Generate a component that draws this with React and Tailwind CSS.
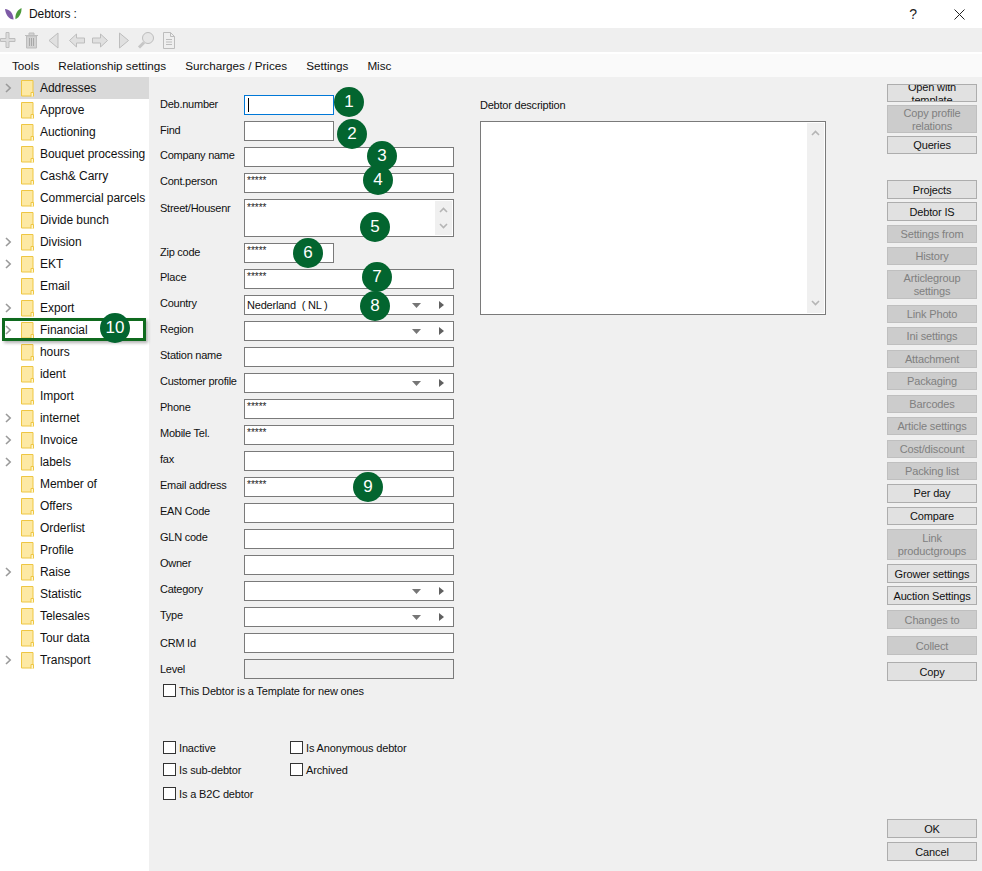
const FONT = "font-['Liberation_Sans',Arial,sans-serif]";

function Folder() {
  return (
    <svg width="13" height="17" viewBox="0 0 13 17" className="shrink-0">
      <path d="M.5.5h11.5v15.5H.5z" fill="#fde9a4" stroke="#eec643" />
      <path d="M10 16.5v-4h2.5v4" fill="#fff6d0" stroke="#eec643" />
    </svg>
  );
}

function Chevron() {
  return (
    <svg width="7" height="10" viewBox="0 0 7 10">
      <path d="M1 1l4.2 4L1 9" fill="none" stroke="#9a9a9a" strokeWidth="1.6" />
    </svg>
  );
}

const tree = [
  ["Addresses", true], ["Approve"], ["Auctioning"], ["Bouquet processing"], ["Cash& Carry"],
  ["Commercial parcels"], ["Divide bunch"], ["Division", true], ["EKT", true], ["Email"],
  ["Export", true], ["Financial", true], ["hours"], ["ident"], ["Import"], ["internet", true],
  ["Invoice", true], ["labels", true], ["Member of"], ["Offers"], ["Orderlist"], ["Profile"],
  ["Raise", true], ["Statistic"], ["Telesales"], ["Tour data"], ["Transport", true],
];

function Sidebar() {
  return (
    <div className="w-[149px] shrink-0 bg-white pb-[200px]">
      {tree.map(([name, arrow], i) => (
        <div key={name} className={`h-[22px] flex items-center text-[12px] tracking-[-0.05px] text-[#111] ${i === 0 ? "bg-[#d9d9d9]" : ""}`}>
          <div className="w-[21px] pl-[5px] flex items-center">{arrow && <Chevron />}</div>
          <Folder />
          <span className="ml-[6px] whitespace-nowrap">{name}</span>
        </div>
      ))}
    </div>
  );
}

function Input({ value, wide = true, tall, focus, combo, disabled }) {
  return (
    <div
      className={`relative flex items-center border ${focus ? "border-[#0078d7]" : "border-[#7a7a7a]"} ${disabled ? "bg-[#f0f0f0]" : "bg-white"} ${wide ? "w-[210px]" : "w-[90px]"} ${tall ? "h-[38px] items-start pt-[1px]" : "h-[20px]"} pl-[2px] text-[11px] text-[#111] overflow-hidden`}
    >
      {focus && <div className="w-px h-[14px] bg-black ml-px" />}
      {value && <span className={value === "*****" ? "text-[10px] leading-[12px] text-[#222] self-start mt-[1px]" : "whitespace-pre tracking-[-0.2px]"}>{value}</span>}
      {combo && (
        <div className="absolute right-[9px] top-[5px] flex items-center gap-[18px]">
          <svg width="9" height="5" viewBox="0 0 9 5"><path d="M0 0h9L4.5 5z" fill="#767676" /></svg>
          <svg width="5" height="8" viewBox="0 0 5 8"><path d="M0 0l5 4-5 4z" fill="#606060" /></svg>
        </div>
      )}
      {tall && (
        <div className="absolute right-[1px] top-[1px] bottom-[1px] w-[17px] bg-[#f0f0f0] flex flex-col justify-between items-center py-[6px]">
          <svg width="9" height="6" viewBox="0 0 9 6"><path d="M1 5l3.5-3.5L8 5" fill="none" stroke="#b5b5b5" strokeWidth="1.6" /></svg>
          <svg width="9" height="6" viewBox="0 0 9 6"><path d="M1 1l3.5 3.5L8 1" fill="none" stroke="#b5b5b5" strokeWidth="1.6" /></svg>
        </div>
      )}
    </div>
  );
}

const UP = "leading-[16px]";
const MID = "leading-[18px]";
const DOWN = "leading-[20px]";

const rows = [
  { label: "Deb.number", wide: false, focus: true, lh: MID },
  { label: "Find", wide: false, lh: MID },
  { label: "Company name", lh: UP },
  { label: "Cont.person", value: "*****", lh: UP },
  { label: "Street/Housenr", value: "*****", tall: true, lh: MID },
  { label: "Zip code", value: "*****", wide: false, lh: MID },
  { label: "Place", value: "*****", lh: UP },
  { label: "Country", value: "Nederland  ( NL )", combo: true, lh: UP },
  { label: "Region", combo: true, lh: UP },
  { label: "Station name", lh: UP },
  { label: "Customer profile", combo: true, lh: UP },
  { label: "Phone", value: "*****", lh: UP },
  { label: "Mobile Tel.", value: "*****", lh: UP },
  { label: "fax", lh: UP },
  { label: "Email address", value: "*****", lh: UP },
  { label: "EAN Code", lh: UP },
  { label: "GLN code", lh: UP },
  { label: "Owner", lh: UP },
  { label: "Category", combo: true, lh: UP },
  { label: "Type", combo: true, lh: UP },
  { label: "CRM Id", lh: DOWN },
  { label: "Level", disabled: true, lh: DOWN },
];

function Check({ label }) {
  return (
    <div className="flex items-center h-[13px] whitespace-nowrap text-[11px] tracking-[-0.15px] text-[#111]">
      <div className="w-[13px] h-[13px] bg-white border border-[#333] shrink-0" />
      <span className="ml-[3px] mt-[2px]">{label}</span>
    </div>
  );
}

function Form() {
  return (
    <div className="w-[331px] shrink-0 pt-[18px] pl-[11px]">
      <div className="flex flex-col gap-[6px]">
        {rows.map(({ label, lh, ...r }) => (
          <div key={label} className="flex items-start">
            <div className={`w-[84px] text-[11px] tracking-[-0.25px] text-[#111] whitespace-nowrap ${lh}`}>{label}</div>
            <Input {...r} />
          </div>
        ))}
      </div>
      <div className="ml-[3px] mt-[5px]"><Check label="This Debtor is a Template for new ones" /></div>
      <div className="ml-[3px] mt-[44px] grid grid-cols-[127px_1fr] gap-y-[9px]">
        <Check label="Inactive" />
        <Check label="Is Anonymous debtor" />
        <Check label="Is sub-debtor" />
        <Check label="Archived" />
        <div className="mt-[2px]"><Check label="Is a B2C debtor" /></div>
      </div>
    </div>
  );
}

function Description() {
  return (
    <div className="w-[346px] shrink-0 pt-[20px]">
      <div className="text-[11px] tracking-[-0.22px] leading-[16px] text-[#111]">Debtor description</div>
      <div className="relative mt-[8px] h-[194px] bg-white border border-[#7a7a7a]">
        <div className="absolute right-[1px] top-[1px] bottom-[1px] w-[17px] bg-[#f0f0f0] flex flex-col justify-between items-center py-[7px]">
          <svg width="9" height="6" viewBox="0 0 9 6"><path d="M1 5l3.5-3.5L8 5" fill="none" stroke="#b5b5b5" strokeWidth="1.6" /></svg>
          <svg width="9" height="6" viewBox="0 0 9 6"><path d="M1 1l3.5 3.5L8 1" fill="none" stroke="#b5b5b5" strokeWidth="1.6" /></svg>
        </div>
      </div>
    </div>
  );
}

const buttons = [
  ["Open with template", true, "h-[18px] mt-[7px] pt-[1px]"],
  ["Copy profile relations", false, "h-[28px] mt-[3px] pt-[2px]"],
  ["Queries", true, "h-[18px] mt-[3px]"],
  ["Projects", true, "h-[19px] mt-[26px] pt-[2px]"],
  ["Debtor IS", true, "h-[19px] mt-[3px] pt-[2px]"],
  ["Settings from", false, "h-[18px] mt-[4px]"],
  ["History", false, "h-[18px] mt-[4px]"],
  ["Articlegroup settings", false, "h-[29px] mt-[5px]"],
  ["Link Photo", false, "h-[18px] mt-[6px]"],
  ["Ini settings", false, "h-[18px] mt-[4px]"],
  ["Attachment", false, "h-[18px] mt-[5px]"],
  ["Packaging", false, "h-[18px] mt-[4px]"],
  ["Barcodes", false, "h-[18px] mt-[5px]"],
  ["Article settings", false, "h-[18px] mt-[4px]"],
  ["Cost/discount", false, "h-[18px] mt-[5px]"],
  ["Packing list", false, "h-[18px] mt-[4px]"],
  ["Per day", true, "h-[19px] mt-[4px]"],
  ["Compare", true, "h-[18px] mt-[4px]"],
  ["Link productgroups", false, "h-[31px] mt-[4px]"],
  ["Grower settings", true, "h-[19px] mt-[4px] pt-[2px]"],
  ["Auction Settings", true, "h-[19px] mt-[3px] pt-[2px]"],
  ["Changes to", false, "h-[19px] mt-[5px] pt-[2px]"],
  ["Collect", false, "h-[19px] mt-[7px] pt-[2px]"],
  ["Copy", true, "h-[19px] mt-[7px] pt-[2px]"],
  ["OK", true, "h-[19px] mt-[138px] pt-[2px]"],
  ["Cancel", true, "h-[19px] mt-[4px] pt-[2px]"],
];

function Buttons() {
  return (
    <div className="w-[90px] shrink-0 ml-[61px] flex flex-col">
      {buttons.map(([t, on, cls]) => (
        <div
          key={t}
          className={`${cls} flex items-center justify-center text-center overflow-hidden border text-[11px] tracking-[-0.15px] leading-[13px] ${on ? "bg-[#e1e1e1] border-[#adadad] text-[#111]" : "bg-[#cccccc] border-[#bfbfbf] text-[#808080]"}`}
        >
          <span className="shrink-0 w-[84px]">{t}</span>
        </div>
      ))}
    </div>
  );
}

function Toolbar() {
  const g = "#c6c6c6";
  return (
    <div className="h-[24px] bg-[#efefef] flex items-center">
      <svg width="182" height="24" viewBox="0 0 182 24" fill="#d2d2d2" stroke="#bdbdbd" strokeWidth="1">
        <path d="M6 4.500h3v6h6v3H9v6H6v-6H.5v-3H6z" fill="#dcdcdc" />
        <path d="M25 7.500h13M29 7V5h5v2M26.500 8h10v12h-10z" />
        <path d="M29.500 10v8M31.500 10v8M33.500 10v8" stroke="#a8a8a8" fill="none" />
        <path d="M58 5v15l-9-7.500z" fill="#e0e0e0" />
        <path d="M69.500 12.500l7-6.500v4h8v5h-8v4z" fill="#e0e0e0" />
        <path d="M107.500 12.500l-7-6.500v4h-8v5h8v4z" fill="#e0e0e0" />
        <path d="M119.500 5v15l9-7.500z" fill="#e0e0e0" />
        <circle cx="148" cy="10" r="5.500" fill="#e6e6e6" />
        <path d="M144 14.500l-5 5" strokeWidth="3" stroke={g} />
        <path d="M163.500 4.500h7l4 4v12h-11zM170.500 4.500v4h4M166 11.500h6M166 14h6M166 16.500h6" fill="none" />
      </svg>
    </div>
  );
}

const badges = [
  ["1", "left-[334px] top-[87px]"],
  ["2", "left-[337px] top-[119px]"],
  ["3", "left-[367px] top-[141px]"],
  ["4", "left-[363px] top-[165px]"],
  ["5", "left-[360px] top-[212px]"],
  ["6", "left-[293px] top-[238px]"],
  ["7", "left-[362px] top-[262px]"],
  ["8", "left-[360px] top-[291px]"],
  ["9", "left-[353px] top-[472px]"],
  ["10", "left-[100px] top-[313px]"],
];

export default function App() {
  return (
    <div className={`relative w-[982px] h-[871px] overflow-hidden bg-[#f0f0f0] flex flex-col ${FONT}`}>
      <div className="h-[28px] shrink-0 bg-white flex items-center pl-[5px] pr-[17px]">
        <svg width="17" height="12" viewBox="0 0 17 12">
          <path d="M0 1c4 .3 8 3 8.600 10.500C4 11.500.8 7 0 1z" fill="#7d5aa6" />
          <path d="M16.500 0c.3 4-1.500 9-6 11.300C9.800 7 12 2 16.500 0z" fill="#4c9a3c" />
        </svg>
        <span className="ml-[7px] text-[12px] tracking-[-0.1px] text-[#111]">Debtors :</span>
        <span className="ml-auto text-[14px] text-[#222] mr-[37px]">?</span>
        <svg width="11" height="11" viewBox="0 0 11 11"><path d="M.5.500l10 10M10.500.500l-10 10" stroke="#222" fill="none" /></svg>
      </div>
      <Toolbar />
      <div className="h-[2px] shrink-0 bg-white" />
      <div className="h-[23px] shrink-0 bg-[#fafafa] flex items-center pl-[12px] gap-[19px] text-[11.7px] text-[#111]">
        <span>Tools</span>
        <span>Relationship settings</span>
        <span>Surcharges / Prices</span>
        <span>Settings</span>
        <span>Misc</span>
      </div>
      <div className="flex flex-1 min-h-0">
        <Sidebar />
        <Form />
        <Description />
        <Buttons />
      </div>
      <div className="absolute left-[2px] top-[318px] w-[144px] h-[23px] border-[3px] border-[#0f6a1e] shadow-[2px_2px_3px_rgba(0,0,0,0.3)]" />
      {badges.map(([n, pos]) => (
        <div key={n} className={`absolute ${pos} w-[30px] h-[30px] rounded-full bg-[#03652f] text-white text-[17px] flex items-center justify-center`}>
          {n}
        </div>
      ))}
    </div>
  );
}
